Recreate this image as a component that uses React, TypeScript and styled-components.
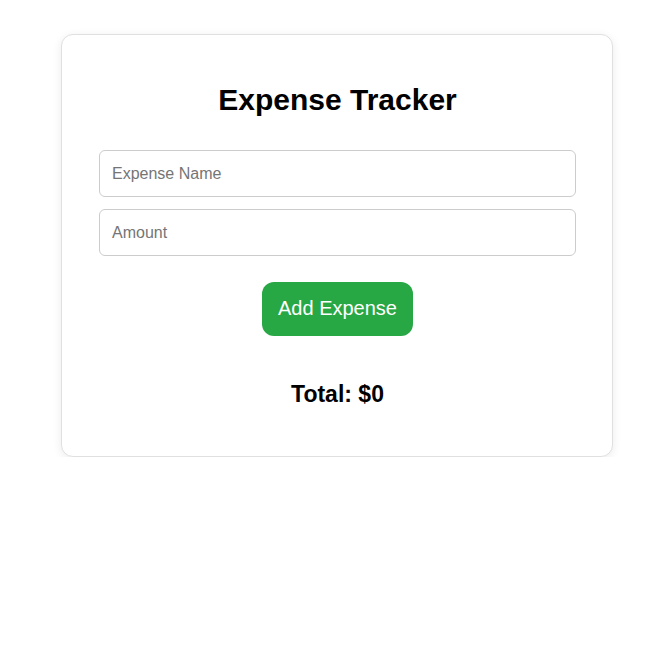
import React, { useState } from "react";
import styled, { createGlobalStyle } from "styled-components";

const GlobalStyle = createGlobalStyle`
  html, body {
    margin: 0;
    padding: 0;
    background: #ffffff;
    font-family: "Liberation Sans", Arial, sans-serif;
  }
`;

const Page = styled.div`
  padding: 34px 0 0 61px;
`;

const Card = styled.div`
  box-sizing: border-box;
  width: 552px;
  padding: 30px 36px 48px 37px;
  border: 1px solid #e0e0e0;
  border-radius: 12px;
  box-shadow: 0 2px 10px rgba(0, 0, 0, 0.08);
  background: #fff;
  display: flex;
  flex-direction: column;
  align-items: stretch;
`;

const Title = styled.h1`
  margin: 18px 0 33px;
  font-size: 30px;
  font-weight: bold;
  text-align: center;
  color: #000;
`;

const Input = styled.input`
  box-sizing: border-box;
  width: 100%;
  height: 47px;
  padding: 0 12px;
  margin-bottom: 12px;
  border: 1px solid #cccccc;
  border-radius: 6px;
  font-family: "Liberation Sans", Arial, sans-serif;
  font-size: 16px;
  color: #000;
  outline: none;
  &::placeholder {
    color: #757575;
  }
`;

const Button = styled.button`
  align-self: center;
  margin-top: 14px;
  padding: 15px 16px 16px;
  border: none;
  border-radius: 12px;
  background: #28a745;
  color: #fff;
  font-family: "Liberation Sans", Arial, sans-serif;
  font-size: 20px;
  cursor: pointer;
`;

const Total = styled.h3`
  margin: 45px 0 0;
  font-size: 23px;
  font-weight: bold;
  text-align: center;
  color: #000;
`;

export default function App() {
  const [name, setName] = useState("");
  const [amount, setAmount] = useState("");
  const [total, setTotal] = useState(0);

  const add = () => {
    const v = parseFloat(amount);
    if (!name || isNaN(v)) return;
    setTotal((t) => t + v);
    setName("");
    setAmount("");
  };

  return (
    <>
      <GlobalStyle />
      <Page>
        <Card>
          <Title>Expense Tracker</Title>
          <Input placeholder="Expense Name" value={name} onChange={(e) => setName(e.target.value)} />
          <Input placeholder="Amount" type="number" value={amount} onChange={(e) => setAmount(e.target.value)} />
          <Button onClick={add}>Add Expense</Button>
          <Total>Total: ${total}</Total>
        </Card>
      </Page>
    </>
  );
}
